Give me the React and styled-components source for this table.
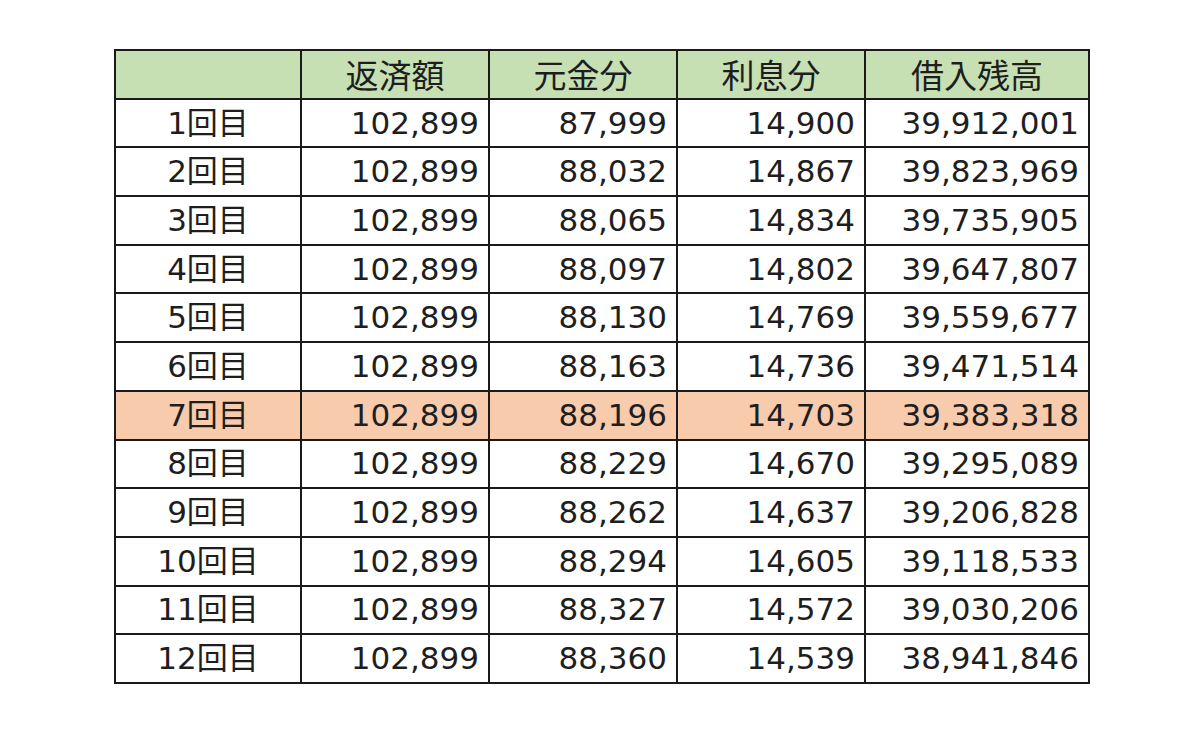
import styled, { createGlobalStyle } from "styled-components";

const GlobalStyle = createGlobalStyle`
  html, body {
    margin: 0;
    background: #ffffff;
  }
  body {
    font-family: "DejaVu Sans", "Noto Sans CJK JP", sans-serif;
  }
`;

const rows = [
  ["1回目", "102,899", "87,999", "14,900", "39,912,001"],
  ["2回目", "102,899", "88,032", "14,867", "39,823,969"],
  ["3回目", "102,899", "88,065", "14,834", "39,735,905"],
  ["4回目", "102,899", "88,097", "14,802", "39,647,807"],
  ["5回目", "102,899", "88,130", "14,769", "39,559,677"],
  ["6回目", "102,899", "88,163", "14,736", "39,471,514"],
  ["7回目", "102,899", "88,196", "14,703", "39,383,318"],
  ["8回目", "102,899", "88,229", "14,670", "39,295,089"],
  ["9回目", "102,899", "88,262", "14,637", "39,206,828"],
  ["10回目", "102,899", "88,294", "14,605", "39,118,533"],
  ["11回目", "102,899", "88,327", "14,572", "39,030,206"],
  ["12回目", "102,899", "88,360", "14,539", "38,941,846"],
];

const headers = ["", "返済額", "元金分", "利息分", "借入残高"];
const widths = [186, 188, 188, 188, 224];

function App() {
  return (
    <Page>
      <GlobalStyle />
      <Table>
        <colgroup>
          {widths.map((w, i) => (
            <col key={i} style={{ width: w }} />
          ))}
        </colgroup>
        <thead>
          <tr>
            {headers.map((h, i) => (
              <HeadCell key={i}>{h}</HeadCell>
            ))}
          </tr>
        </thead>
        <tbody>
          {rows.map((r, i) => (
            <Row key={i} $highlight={i === 6}>
              <LabelCell>{r[0]}</LabelCell>
              {r.slice(1).map((v, j) => (
                <NumCell key={j}>{v}</NumCell>
              ))}
            </Row>
          ))}
        </tbody>
      </Table>
    </Page>
  );
}

const Page = styled.div`
  padding: 49px 0 0 114px;
`;

const Table = styled.table`
  border-collapse: collapse;
  table-layout: fixed;
  width: 974px;
  color: #1e1e1e;
  border: 2px solid #1a1a1a;
`;

const HeadCell = styled.th`
  height: 46.7px;
  padding: 0;
  background: #c6e0b4;
  border: 2px solid #1a1a1a;
  font-family: "Noto Sans CJK JP", sans-serif;
  font-weight: 400;
  font-size: 33px;
  line-height: 1;
  text-align: center;
  color: #1e1e1e;
`;

const Row = styled.tr`
  background: ${(p) => (p.$highlight ? "#f8cbad" : "#ffffff")};
`;

const Cell = styled.td`
  height: 46.7px;
  padding: 0 9px 0 0;
  border: 2px solid #1a1a1a;
  font-size: 31px;
  line-height: 1;
  white-space: nowrap;
  overflow: hidden;
`;

const LabelCell = styled(Cell)`
  padding: 0;
  text-align: center;
  font-family: "DejaVu Sans", "Noto Sans CJK JP", sans-serif;
`;

const NumCell = styled(Cell)`
  text-align: right;
`;

export default App;
